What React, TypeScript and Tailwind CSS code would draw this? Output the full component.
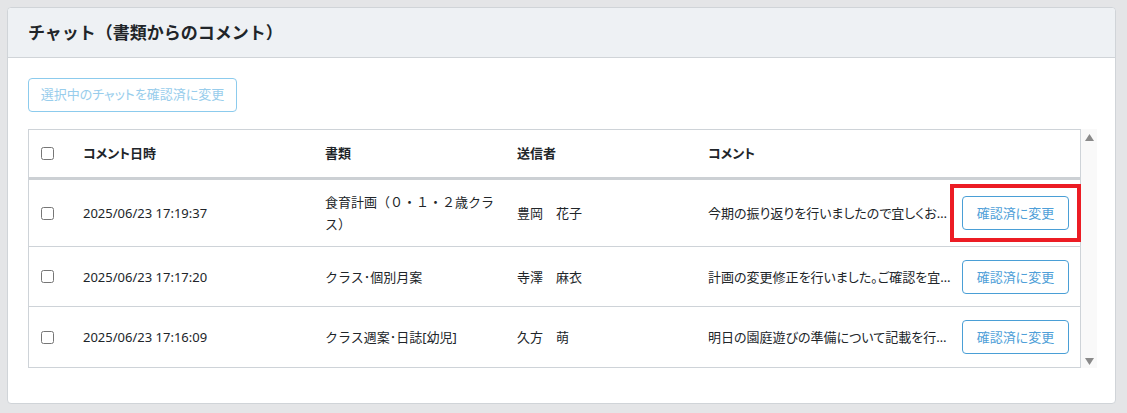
import React from "react";

type ChatRow = {
  id: number;
  date: string;
  document: string;
  sender: string;
  comment: string;
  highlighted?: boolean;
};

const rows: ChatRow[] = [
  {
    id: 1,
    date: "2025/06/23 17:19:37",
    document: "食育計画（０・１・２歳クラス）",
    sender: "豊岡　花子",
    comment: "今期の振り返りを行いましたので宜しくお願いいたします。",
    highlighted: true,
  },
  {
    id: 2,
    date: "2025/06/23 17:17:20",
    document: "クラス･個別月案",
    sender: "寺澤　麻衣",
    comment: "計画の変更修正を行いました。ご確認を宜しくお願いします。",
  },
  {
    id: 3,
    date: "2025/06/23 17:16:09",
    document: "クラス週案･日誌[幼児]",
    sender: "久方　萌",
    comment: "明日の園庭遊びの準備について記載を行いました。",
  },
];

const gridCols = "grid grid-cols-[42px_242px_192px_191px_1fr]";

const ConfirmButton = ({ highlighted }: { highlighted?: boolean }) => (
  <span className="relative ml-2 shrink-0">
    <button className="h-[34px] w-[107px] rounded-[4px] border border-[#4a9fd6] bg-white text-[13px] text-[#4f9fd8]">
      確認済に変更
    </button>
    {highlighted && (
      <span className="pointer-events-none absolute -inset-3 border-4 border-[#ec1c24]" />
    )}
  </span>
);

const Arrow = ({ down }: { down?: boolean }) => (
  <svg width="9" height="7" viewBox="0 0 9 7">
    <polygon
      points={down ? "0,0 9,0 4.5,7" : "4.5,0 9,7 0,7"}
      fill="#8a8a8a"
    />
  </svg>
);

export default function App() {
  return (
    <div className="min-h-screen bg-[#e4e5e7] pl-[7px] pr-[11px] pt-[7px] pb-[10px] font-['Noto_Sans','Noto_Sans_CJK_JP',sans-serif] text-[#212529]">
      <div className="rounded-[4px] border border-[#d0d4d8] bg-white">
        <div className="flex h-[50px] items-center rounded-t-[4px] border-b border-[#d0d4d8] bg-[#eef1f4] px-5">
          <h2 className="text-[17px] font-bold">チャット（書類からのコメント）</h2>
        </div>

        <div className="pl-5 pr-[18px] pt-5 pb-[35px] [font-feature-settings:'palt']">
          <button
            disabled
            className="h-[34px] w-[209px] rounded-[4px] border border-[#8ccbed] bg-white text-[13px] text-[#98cdec]"
          >
            選択中のチャットを確認済に変更
          </button>

          <div className="mt-[17px] flex">
            <div className="flex-1 border border-[#ced3d8] text-[13px]">
              {/* header */}
              <div className={`${gridCols} h-[50px] items-center border-b-[3px] border-[#ccd0d4] font-bold`}>
                <div className="pl-3 flex items-center">
                  <input type="checkbox" className="h-[13px] w-[13px]" />
                </div>
                <div className="px-3">コメント日時</div>
                <div className="px-3">書類</div>
                <div className="px-3">送信者</div>
                <div className="px-3">コメント</div>
              </div>

              {rows.map((row, i) => (
                <div
                  key={row.id}
                  className={`${gridCols} min-h-[60px] items-center leading-[22px] ${
                    i < rows.length - 1 ? "border-b border-[#ced3d8]" : ""
                  }`}
                >
                  <div className="pl-3 flex items-center">
                    <input type="checkbox" className="h-[13px] w-[13px]" />
                  </div>
                  <div className="px-3">{row.date}</div>
                  <div className="pl-3 pr-2 py-[11px] [font-feature-settings:normal]">
                    {row.document}
                  </div>
                  <div className="px-3">{row.sender}</div>
                  <div className="flex min-w-0 items-center pl-3 pr-[11px]">
                    <span className="min-w-0 flex-1 truncate">{row.comment}</span>
                    <ConfirmButton highlighted={row.highlighted} />
                  </div>
                </div>
              ))}
            </div>

            <div className="flex w-4 flex-col items-center justify-between bg-[#f9f9f9] pt-[5px] pb-[3px]">
              <Arrow />
              <Arrow down />
            </div>
          </div>
        </div>
      </div>
    </div>
  );
}
